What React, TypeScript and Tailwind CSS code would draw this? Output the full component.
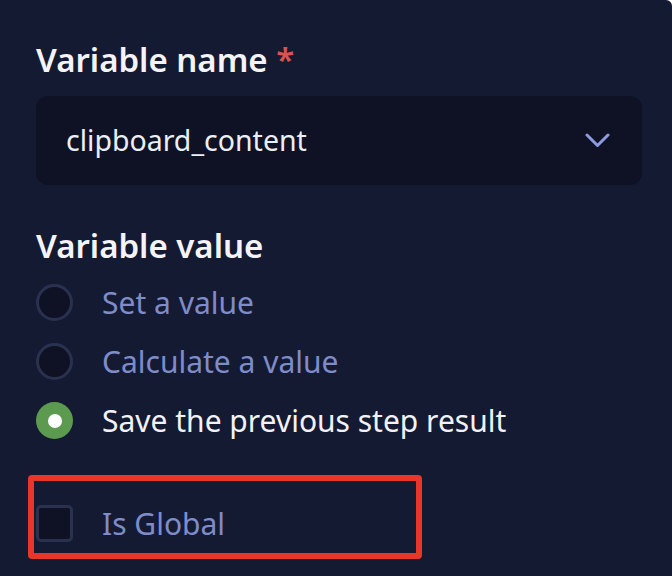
import { useState } from "react";

const FONT = { fontFamily: '"Noto Sans", "Open Sans", sans-serif' };

type Option = { id: string; label: string };

const OPTIONS: Option[] = [
  { id: "set", label: "Set a value" },
  { id: "calc", label: "Calculate a value" },
  { id: "prev", label: "Save the previous step result" },
];

function Radio({ checked }: { checked: boolean }) {
  if (checked) {
    return (
      <span className="flex h-[37px] w-[37px] shrink-0 items-center justify-center rounded-full bg-[#5b9a4f]">
        <span className="h-[14px] w-[14px] rounded-full bg-white" />
      </span>
    );
  }
  return <span className="h-[37px] w-[37px] shrink-0 rounded-full border-[3px] border-[#29314f] bg-[#0e1224]" />;
}

export default function App() {
  const [value, setValue] = useState("prev");
  const [global, setGlobal] = useState(false);

  return (
    <div className="h-[576px] w-[672px] bg-white" style={FONT}>
      <div className="flex h-full w-full flex-col rounded-tr-[6px] bg-[#151a33] pl-[36px] pr-[30px] pt-[40px]">
        {/* Variable name */}
        <div className="text-[33px] font-semibold leading-[40px] text-[#f4f4f8]">
          Variable name <span className="text-[#d9534f]">*</span>
        </div>
        <button
          type="button"
          className="mt-[16px] flex h-[89px] w-[606px] items-center justify-between rounded-[12px] bg-[#0e1224] pl-[30px] pr-[32px] text-left"
        >
          <span className="text-[28.5px] leading-none text-[#eceef6]">clipboard_content</span>
          <svg width="25" height="15" viewBox="0 0 25 15" fill="none">
            <polyline
              points="2,2 12.5,12.5 23,2"
              stroke="#8d9be0"
              strokeWidth="3"
              strokeLinecap="round"
              strokeLinejoin="round"
            />
          </svg>
        </button>

        {/* Variable value */}
        <div className="mt-[41px] text-[33px] font-semibold leading-[40px] text-[#f4f4f8]">Variable value</div>
        <div className="mt-[7px] flex flex-col">
          {OPTIONS.map((o) => {
            const checked = value === o.id;
            return (
              <label
                key={o.id}
                onClick={() => setValue(o.id)}
                className="flex h-[59px] cursor-pointer items-center gap-[29px]"
              >
                <Radio checked={checked} />
                <span className={checked ? "text-[30px] leading-none text-[#f2f2f6]" : "text-[30px] leading-none text-[#7f8cc8]"}>
                  {o.label}
                </span>
              </label>
            );
          })}
        </div>

        {/* Is Global, highlighted */}
        <div className="-ml-[8px] mt-[25px] w-[394px] rounded-[4px] border-[6px] border-[#e8372a] pl-[2px] pt-[13px]">
          <label onClick={() => setGlobal(!global)} className="flex h-[59px] cursor-pointer items-center gap-[29px]">
            <span className="h-[37px] w-[37px] shrink-0 rounded-[5px] border-[3px] border-[#29314f] bg-[#0e1224]" />
            <span className="text-[30px] leading-none text-[#7f8cc8]">Is Global</span>
          </label>
        </div>
      </div>
    </div>
  );
}
